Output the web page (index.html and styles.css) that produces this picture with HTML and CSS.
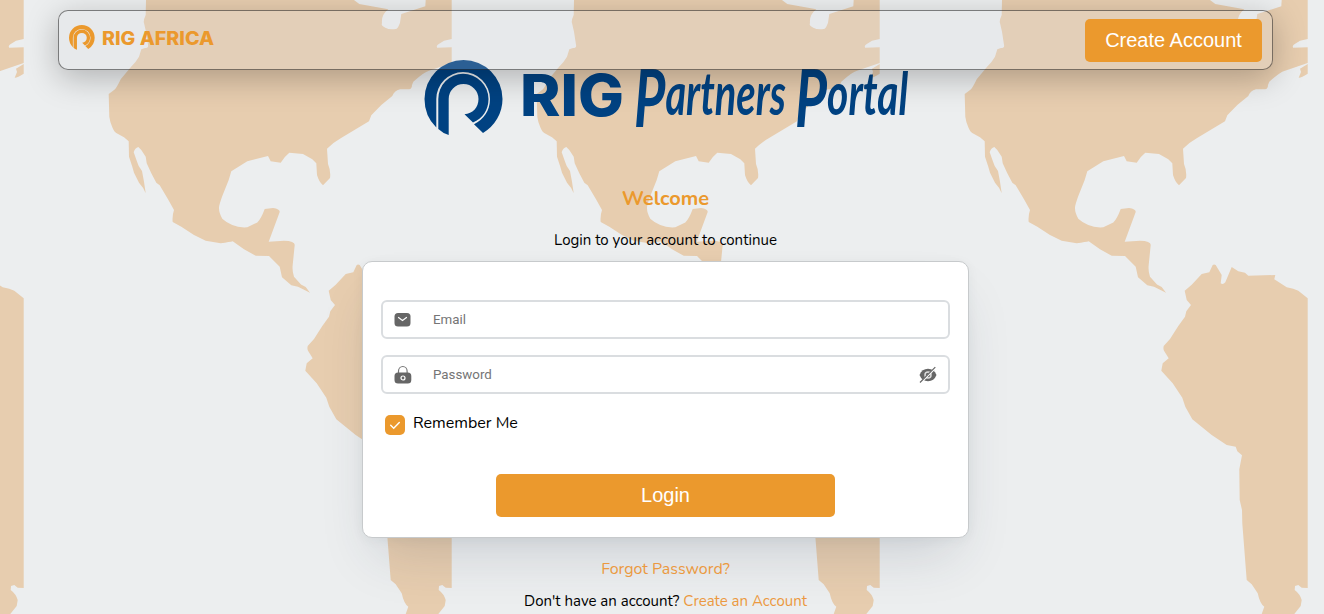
FILE: index.html
```html
<!DOCTYPE html>
<html lang="en">
<head>
<meta charset="utf-8">
<title>RIG Partners Portal</title>
<link rel="stylesheet" href="styles.css">
</head>
<body>
<svg class="map" width="1324" height="614" viewBox="0 0 1324 614" aria-hidden="true">
  <defs>
    <g id="continent">
      <path d="M1002 0L1001.7 15Q999 21 1000 23L1002 31.7 1004.2 46Q1004 48 1001 48L997.3 49.3 995 56.7Q992 62 986.7 67.3L976.7 79.3Q973 87 971 89.3L964.7 94 965.3 116.7Q966 122 968.3 127.3T972.7 133.3L980 137.3 984.7 141.3 985 156.7 988.3 166.7 990 172.7 995 182.7Q1000 188 1001.7 193.3L1000 181.7 998 171Q994 166 992.7 160.7L989.7 152.3Q991 148 994.3 147L997.3 150 1001.7 156.7 1002.7 163.3 1007.3 173.3 1012.3 182.7 1015.7 185.3 1024 199.3 1030 210Q1028 216 1028.7 222L1037.3 226.7 1050 235 1061.7 240.7 1076.7 243.3Q1086 242 1088.7 241.3L1100 249.3 1111.7 255.7 1125 256 1135.7 266.7 1138 277.3 1147.3 285.3 1154 286.7 1166 292.7 1161.7 287 1157 284.5 1150 276.7Q1148 271 1148.7 265L1150.7 245Q1151 241 1140 240.7L1124.7 241.7 1135.7 212Q1136 209 1129 208L1120.7 209Q1117 219 1113.3 222.5L1103.3 227.3Q1095 228 1088.3 225T1078.3 218.7Q1074 211 1075.3 205.5T1080 191.7L1084.7 180 1087.3 171.3 1103.3 161.3 1124 156 1126.7 161.3 1136.7 162.7Q1141 156 1145.3 152.7L1159 154 1168.3 159.3 1172.3 163.3 1173 175Q1175 182 1179 185.3L1186 178Q1187 171 1184 164L1183 148.7Q1190 142 1196.7 138.3L1225 121.3 1227.3 115.3 1237.3 105 1248.3 96Q1250 91 1256 89.3L1265 89.3Q1268 89 1268 85L1269.3 81.7Q1280 72 1285 70.7L1307.7 63V47.3L1293.3 47.7Q1292 46 1294 44.5L1300 40.7 1307.7 39V0H1281.7L1281.3 6.3 1257.3 14 1256 22.7Q1254 28 1252.7 28.7 1246 30.2 1241.3 27.7T1238 23.3Q1237 15 1244.3 9.3L1215.3 4 1210 0Z"/>
      <path d="M1307.7 64L1300 68.7 1301 72 1298.7 77.7Q1301 78 1307.7 73.7Z"/>
      <path d="M1307.7 298.3L1298.3 290.7Q1294 288.5 1286.7 287.3L1274.3 279.3 1275.3 275 1248.3 275.7 1245 272.7 1238.3 271.3 1231.7 267 1225.3 282.3Q1223 285 1220.7 283.3L1221.7 275 1215.7 265Q1214 264 1212.7 265L1209.3 272.3 1201.7 274 1191.7 284.7 1184.7 290.7 1186.7 300 1191 305 1186.3 311.3 1185 316.7 1178.3 326 1170 339 1163.7 346Q1163 349 1164 350.7L1168.7 358.3 1162.7 363.3 1161.3 370.7 1172.7 383.3 1182.3 397.7 1185.3 406.7 1192.3 419.3 1211.7 435 1226.7 445 1235.7 446.7 1237.3 451.3 1242 455.3 1239.3 469.3 1239.7 500 1242 510 1242.3 523.3 1246.7 580 1251.7 584.3 1257.7 593.3Q1260 604 1264.3 606.7L1261.7 614H1294.3L1300.7 606 1301.7 600Q1300 594 1294.7 590L1295 586 1298.3 585 1301.7 587.7 1307.7 588Z"/>
    </g>
  </defs>
  <use href="#continent"/>
  <use href="#continent" x="-428"/>
  <use href="#continent" x="-856"/>
  <use href="#continent" x="-1284"/>
</svg>

<header class="topbar">
  <svg class="brand" width="146" height="28" viewBox="0 0 146 28" role="img" aria-label="RIG Africa">
    <use href="#ring" transform="scale(.329)" fill="#eb992d"/>
    <text class="brand-text" x="33" y="19.500" textLength="112" lengthAdjust="spacingAndGlyphs">RIG AFRICA</text>
  </svg>
  <button class="button button-create">Create Account</button>
</header>

<main class="page">
  <svg class="logo" width="484" height="80" viewBox="0 0 484 80" role="img" aria-label="RIG Partners Portal">
    <defs>
      <g id="ring">
        <path d="M11.8 67.5V39A27 27 0 0 1 38.5 12 27 27 0 0 1 65.5 39C65.500 51 59 59.500 49.500 64.200L58.500 73A39.500 39.500 0 0 0 78 39 39 39 0 0 0 39 0 39 39 0 0 0 0 39Q0 56 11.800 67.500Z"/>
        <path d="M13.800 69Q18 73 24.200 75V39A14.800 14.800 0 0 1 39 24 15 15 0 0 1 54 39C54 47.500 48 53.800 40 54.200L48.500 62.500C58 58.500 64 50 64 39A25.500 25.500 0 0 0 38.500 13.800 25 25 0 0 0 13.800 39Z"/>
      </g>
    </defs>
    <use href="#ring" fill="#004282" x=".5"/>
    <text class="logo-rig" x="96" y="56" textLength="104" lengthAdjust="spacingAndGlyphs">RIG</text>
    <g transform="translate(210 55) scale(.675 1)">
      <text class="logo-script" x="0" y="0"><tspan class="logo-initial" dy="12">P</tspan><tspan dy="-12">artners</tspan></text>
    </g>
    <g transform="translate(371 55) scale(.69 1)">
      <text class="logo-script" x="0" y="0"><tspan class="logo-initial" dy="12">P</tspan><tspan dy="-12">ortal</tspan></text>
    </g>
  </svg>
  <h1 class="title">Welcome</h1>
  <p class="subtitle">Login to your account to continue</p>

  <form class="card">
    <label class="field">
      <svg class="icon" width="18" height="20" viewBox="0 0 18 20"><rect x=".5" y="3" width="16" height="13.500" rx="3.500" fill="#666"/><path d="M4.500 7.500L8.500 10.500 12.500 7.500" fill="none" stroke="#fff" stroke-width="1.200" stroke-linecap="round"/></svg>
      <input class="input" type="email" placeholder="Email">
    </label>
    <label class="field">
      <svg class="icon" width="18" height="20" viewBox="0 0 18 20"><path d="M4.500 8V6A4.300 4.500 0 0 1 13.100 6V8" fill="none" stroke="#777" stroke-width="1.200"/><rect x=".5" y="7.500" width="16.800" height="11" rx="3.500" fill="#666"/><circle cx="9" cy="13" r="2" fill="none" stroke="#fff" stroke-width="1.200"/></svg>
      <input class="input" type="password" placeholder="Password">
      <svg class="icon" width="20" height="20" viewBox="0 0 20 20"><path d="M1.500 10Q4 3.800 10 3.800T18.500 10Q16 16.200 10 16.200T1.500 10Z" fill="#666"/><circle cx="10" cy="10" r="3" fill="#666" stroke="#ddd" stroke-width="1.500"/><path d="M2.400 18L18 2.400" stroke="#fff" stroke-width="1.800"/><path d="M2 17.500L17.300 2.200" stroke="#666" stroke-width="1.200"/></svg>
    </label>
    <div class="remember">
      <span class="check"><svg width="20" height="20" viewBox="0 0 20 20"><path d="M5.700 10.300L8.700 13.200 14.300 7.500" fill="none" stroke="#fff" stroke-width="1.400" stroke-linecap="round"/></svg></span>
      <span class="remember-text">Remember Me</span>
    </div>
    <button class="button button-login" type="button">Login</button>
  </form>

  <a class="link forgot">Forgot Password?</a>
  <p class="signup">Don't have an account? <a class="link">Create an Account</a></p>
</main>
</body>
</html>
```
FILE: styles.css
```css
* { box-sizing: border-box; }

body {
  margin: 0;
  height: 614px;
  overflow: hidden;
  background: #eceeef;
  color: #000;
  font-family: Nunito, Lato, sans-serif;
}

.map {
  position: absolute;
  inset: 0;
  z-index: -1;
  fill: #e7cdaf;
}

.topbar {
  position: absolute;
  top: 10px;
  left: 58px;
  z-index: 2;
  width: 1215px;
  height: 60px;
  padding: 8px 10px;
  display: flex;
  justify-content: space-between;
  align-items: flex-start;
  border: 1px solid rgba(0, 0, 0, .47);
  border-radius: 10px;
  background: rgba(215, 215, 220, .2);
  box-shadow: 0 8px 32px rgba(0, 0, 0, .25);
}

.brand { margin-top: 6px; overflow: visible; }
.brand-text { font: 800 18.5px Inter, sans-serif; fill: #eb992d; }

.button {
  border: 0;
  border-radius: 5px;
  background: #eb992d;
  color: #fff;
  font: 20px "Liberation Sans", Arial, sans-serif;
  height: 43px;
}
.button-create { width: 177px; padding: 0; }

.page {
  display: flex;
  flex-direction: column;
  align-items: center;
  padding: 60px 0 0 7px;
}

.logo { display: block; overflow: visible; }
.logo-rig { font: 800 58px Inter, sans-serif; fill: #004282; }
.logo-script { font: italic 700 59px Lato, sans-serif; fill: #004282; }
.logo-initial { font-size: 80px; }

.title {
  margin: 46px 0 0;
  font-size: 20px;
  font-weight: 700;
  line-height: 26px;
  color: #eb992d;
}
.subtitle {
  margin: 18px 0 11px;
  font-size: 15px;
  line-height: 20px;
}

.card {
  width: 607px;
  height: 277px;
  padding: 38px 18px 0;
  display: flex;
  flex-direction: column;
  border: 1px solid #c7cacc;
  border-radius: 10px;
  background: #fff;
  box-shadow: 0 28px 50px -14px rgba(40, 55, 80, .17), 0 2px 12px rgba(40, 50, 60, .05);
}

.field {
  height: 39px;
  margin-bottom: 16px;
  padding: 0 10px 0 11px;
  display: flex;
  align-items: center;
  border: 2px solid #dadde0;
  border-radius: 6px;
}
.input {
  flex: 1;
  border: 0;
  padding: 0;
  margin-left: 21px;
  outline: 0;
  background: transparent;
  font: 13.333px Roboto, sans-serif;
}
.input::placeholder { color: #757575; }

.remember {
  display: flex;
  gap: 8px;
  margin: 4px 0 0 4px;
  height: 22px;
}
.check {
  width: 20px;
  height: 20px;
  margin-top: 1px;
  border-radius: 5px;
  background: #eb992d;
}
.check svg { display: block; }
.remember-text { font-size: 16px; line-height: 19px; }

.button-login {
  width: 339px;
  margin: 38px auto 0;
  padding: 0;
}

.link { color: #eb9940; }
.forgot { margin-top: 20px; font-size: 16px; line-height: 22px; }
.signup { margin: 11px 0 0; font-size: 15px; line-height: 20px; }
```
